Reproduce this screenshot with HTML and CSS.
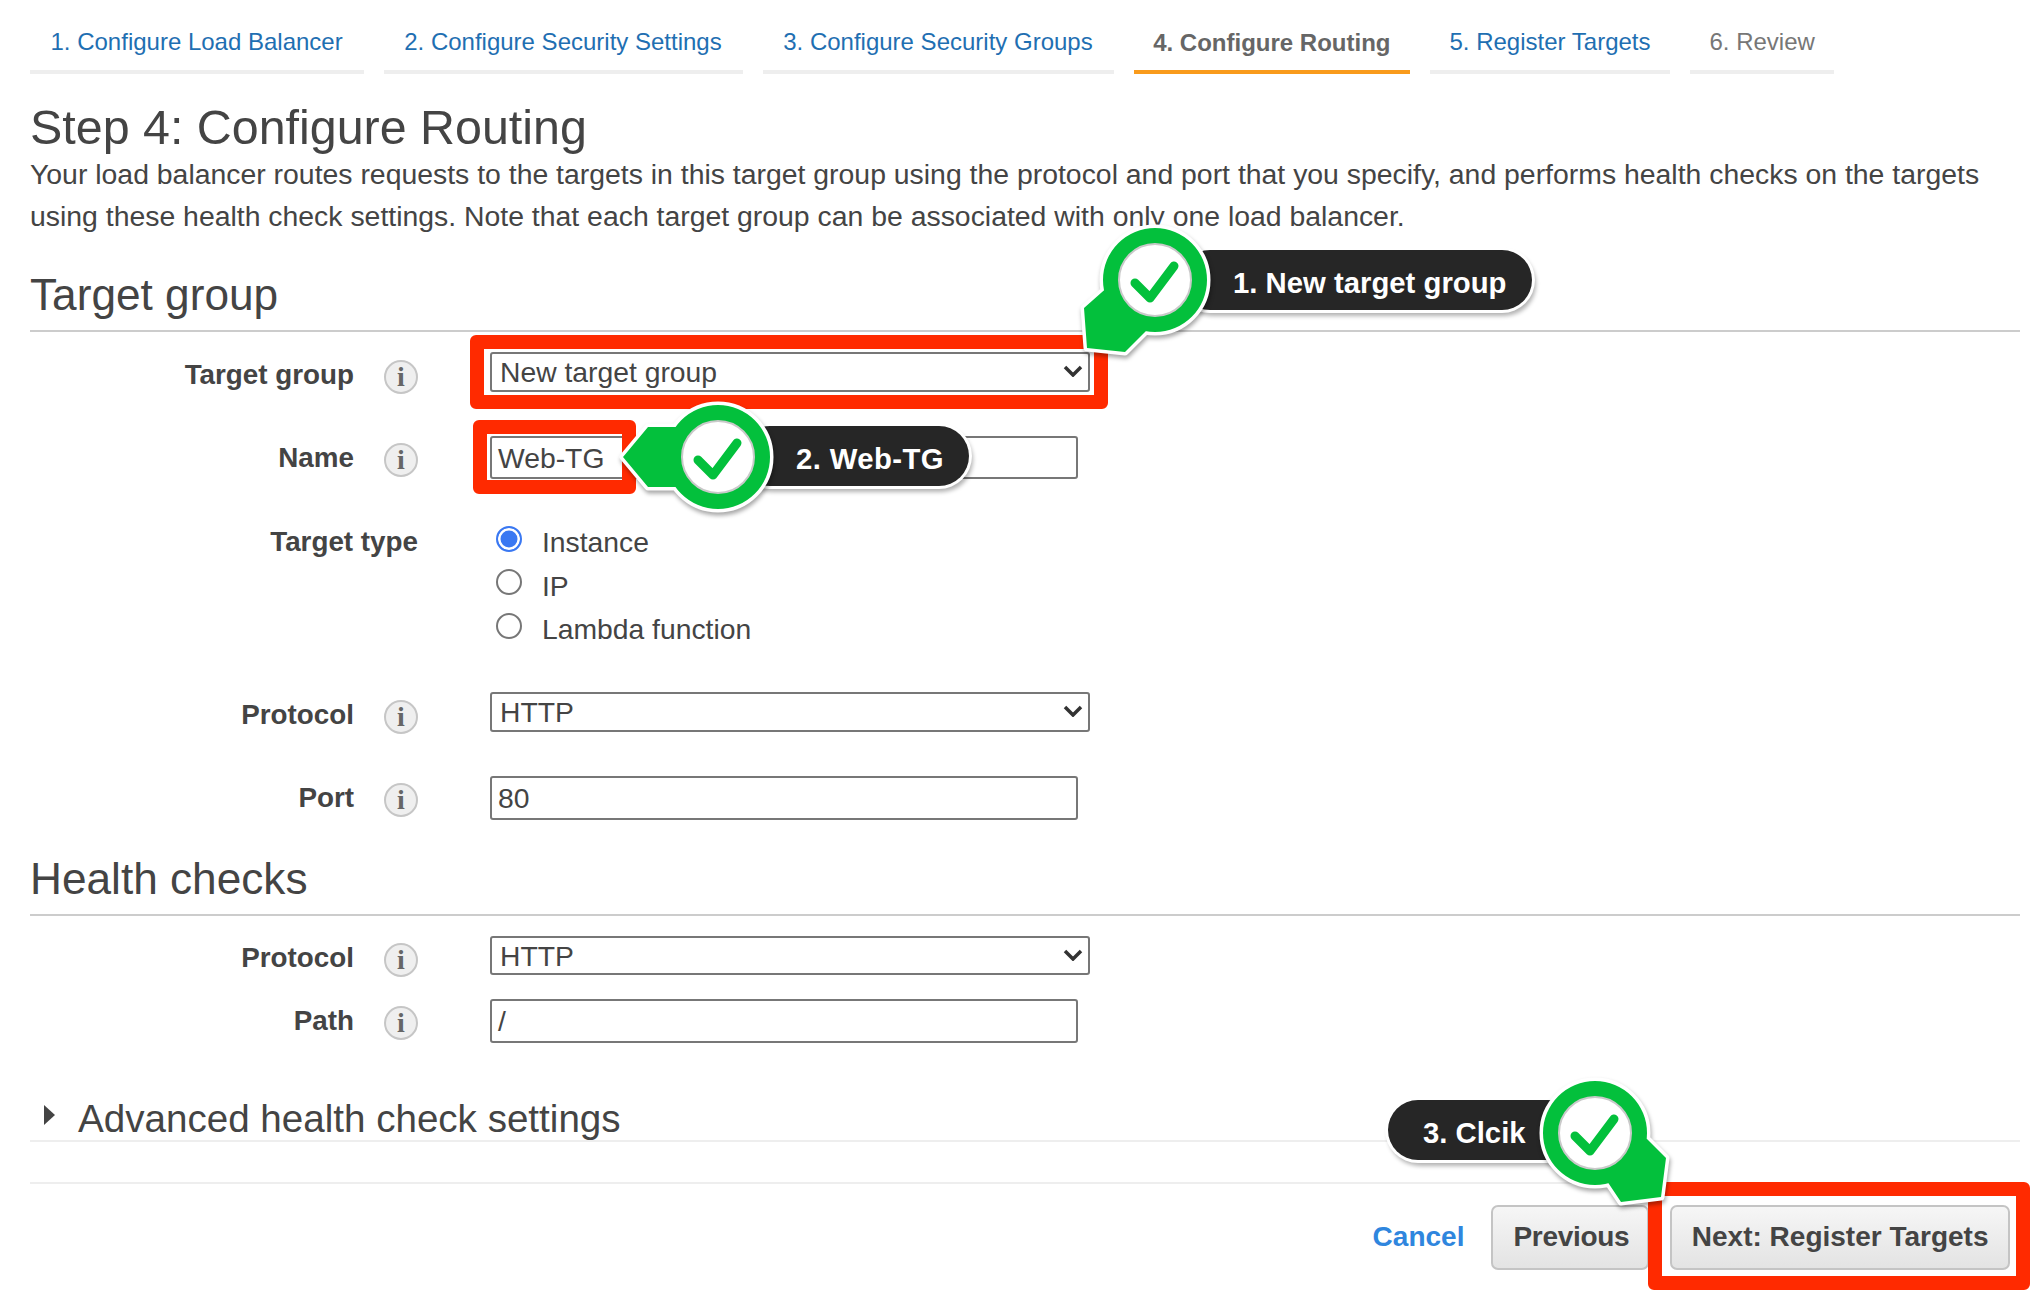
FILE: index.html
```html
<!DOCTYPE html>
<html lang="en">
<head>
  <meta charset="UTF-8" />
  <title>Step 4: Configure Routing</title>
  <link rel="stylesheet" href="styles.css">
</head>
<body>
  <div class="page">
    <ul class="tabs">
      <li class="tab">1. Configure Load Balancer</li>
      <li class="tab">2. Configure Security Settings</li>
      <li class="tab">3. Configure Security Groups</li>
      <li class="tab active">4. Configure Routing</li>
      <li class="tab">5. Register Targets</li>
      <li class="tab off">6. Review</li>
    </ul>

    <h1>Step 4: Configure Routing</h1>
    <p class="intro">Your load balancer routes requests to the targets in this target group using the protocol and port that you specify, and performs health checks on the targets<br>using these health check settings. Note that each target group can be associated with only one load balancer.</p>

    <h2>Target group</h2>
    <div class="row first low">
      <div class="label">Target group</div>
      <div class="info">i</div>
      <div class="select">New target group <svg viewBox="0 0 20 12"><path d="M2 2l8 8 8-8" /></svg></div>
    </div>
    <div class="row name">
      <div class="label">Name</div>
      <div class="info">i</div>
      <div class="input">Web-TG</div>
    </div>
    <div class="row type">
      <div class="label wide">Target type</div>
      <div class="radios">
        <div class="radio-row"><span class="radio on"></span>Instance</div>
        <div class="radio-row"><span class="radio"></span>IP</div>
        <div class="radio-row"><span class="radio"></span>Lambda function</div>
      </div>
    </div>
    <div class="row proto low">
      <div class="label">Protocol</div>
      <div class="info">i</div>
      <div class="select">HTTP <svg viewBox="0 0 20 12"><path d="M2 2l8 8 8-8" /></svg></div>
    </div>
    <div class="row port">
      <div class="label">Port</div>
      <div class="info">i</div>
      <div class="input">80</div>
    </div>

    <h2 class="health">Health checks</h2>
    <div class="row first low">
      <div class="label">Protocol</div>
      <div class="info">i</div>
      <div class="select short">HTTP <svg viewBox="0 0 20 12"><path d="M2 2l8 8 8-8" /></svg></div>
    </div>
    <div class="row path">
      <div class="label">Path</div>
      <div class="info">i</div>
      <div class="input">/</div>
    </div>

    <div class="advanced"><span class="arrow"></span>Advanced health check settings</div>

    <div class="footer">
      <a class="cancel">Cancel</a>
      <button class="btn prev">Previous</button>
      <button class="btn next">Next: Register Targets</button>
    </div>
  </div>

  <!-- annotations drawn on top of the screenshot -->
  <div class="mark mark1"></div>
  <div class="mark mark2"></div>
  <div class="mark mark3"></div>

  <div class="pill pill1">1. New target group</div>
  <svg class="badge badge1" viewBox="-100 -100 200 200">
    <path class="shape" d="M-8 50L-30 72L-68 68L-71 28L-45 5ZM-52 0A52 52 0 1 1 52 0A52 52 0 1 1 -52 0Z" />
    <circle class="hole" r="36" />
    <path class="tick" d="M-20 3L-5 18L19 -14" />
  </svg>

  <div class="pill pill2">2. Web-TG</div>
  <svg class="badge badge2" viewBox="-100 -100 200 200">
    <path class="shape" d="M-40 30L-70 30L-95 0L-70 -30L-40 -30ZM-52 0A52 52 0 1 1 52 0A52 52 0 1 1 -52 0Z" />
    <circle class="hole" r="36" />
    <path class="tick" d="M-20 3L-5 18L19 -14" />
  </svg>

  <div class="pill pill3">3. Clcik</div>
  <svg class="badge badge3" viewBox="-100 -100 200 200">
    <path class="shape" d="M30 -16L71 25L66 64L26 69L10 45ZM-52 0A52 52 0 1 1 52 0A52 52 0 1 1 -52 0Z" />
    <circle class="hole" r="36" />
    <path class="tick" d="M-20 3L-5 18L19 -14" />
  </svg>
</body>
</html>
```

FILE: styles.css
```css
html, body {
  margin: 0;
  background: white;
}
body {
  font-family: "Liberation Sans", Arial, sans-serif;
  color: #444;
  position: relative;
  height: 1302px;
  overflow: hidden;
}
.page {
  padding: 0 20px 0 30px;
}

/* wizard tabs */
.tabs {
  display: flex;
  gap: 20px;
  list-style: none;
  margin: 0;
  padding: 24px 0 0;
}
.tab {
  padding: 0 21px 0 20.5px;
  height: 46px;
  line-height: 36px;
  font-size: 24px;
  color: #1f6fb2;
  border-bottom: 4px solid #eee;
}
.tab:nth-child(n+4) {
  padding: 0 19.5px;
}
.tab.active {
  color: #666;
  font-weight: bold;
  border-bottom-color: #f99b1c;
  line-height: 38px;
}
.tab.off {
  color: #777;
}

h1 {
  margin: 27px 0 0;
  font-size: 48.4px;
  line-height: 52px;
  font-weight: normal;
}
.intro {
  margin: 0;
  font-size: 28.4px;
  line-height: 42px;
  white-space: nowrap;
}
h2 {
  margin: 33px 0 0;
  font-size: 44.2px;
  line-height: 50px;
  font-weight: normal;
  padding-bottom: 10px;
  border-bottom: 2px solid #ccc;
}
h2.health {
  margin-top: 34px;
}

/* form rows */
.row {
  display: grid;
  grid-template-columns: 324px 30px 34px 72px 1fr;
  align-items: center;
}
.row.first { margin-top: 20px; }
.row.name { margin-top: 44px; }
.row.type { margin-top: 42px; align-items: start; }
.row.proto { margin-top: 40px; }
.row.port { margin-top: 44px; }
.row.path { margin-top: 24px; }

.label {
  grid-column: 1;
  text-align: right;
  font-size: 27.8px;
  font-weight: bold;
  line-height: 34px;
}
.label.wide {
  grid-column: 1 / 4;
  margin-top: 4px;
}
.row.low .label {
  margin: 3px 0 -3px;
}
.info {
  grid-column: 3;
  width: 30px;
  height: 30px;
  margin: 2px 0 -2px;
  border: 2px solid #c6c6c6;
  border-radius: 50%;
  background: #efefef;
  text-align: center;
  font-family: "Liberation Serif", serif;
  font-size: 28px;
  font-weight: bold;
  line-height: 30px;
  color: #666;
}
.row.low .info {
  margin: 5px 0 -5px;
}
.select, .input {
  grid-column: 5;
  box-sizing: border-box;
  font-size: 28.3px;
  border: 2px solid #777;
  border-radius: 3px;
  background: white;
}
.select {
  width: 600px;
  height: 40px;
  line-height: 37px;
  padding-left: 8px;
  position: relative;
}
.select.short {
  height: 39px;
}
.select svg {
  position: absolute;
  right: 5px;
  top: 11px;
  width: 20px;
  height: 12px;
}
.select svg path {
  fill: none;
  stroke: #333;
  stroke-width: 3.5;
}
.input {
  width: 588px;
  height: 44px;
  line-height: 40px;
  padding-left: 6px;
}
.row.name .input { height: 43px; }

.radios {
  grid-column: 5;
  font-size: 28.3px;
}
.radio-row {
  display: flex;
  align-items: center;
  height: 43.5px;
}
.radio {
  box-sizing: border-box;
  width: 26px;
  height: 26px;
  margin: -8px 20px 0 6px;
  border: 2px solid #777;
  border-radius: 50%;
  background: white;
}
.radio.on {
  border: 2.5px solid #3a78f2;
  box-shadow: inset 0 0 0 2.5px white;
  background: #3a78f2;
}

.advanced {
  margin-top: 54px;
  font-size: 38.6px;
  line-height: 43px;
  border-bottom: 2px solid #eee;
  display: flex;
  align-items: center;
}
.arrow {
  width: 0;
  height: 0;
  margin: -6px 23px 0 14px;
  border-left: 11px solid #444;
  border-top: 10px solid transparent;
  border-bottom: 10px solid transparent;
}

.footer {
  margin-top: 40px;
  padding: 21px 10px 0 0;
  border-top: 2px solid #eee;
  display: flex;
  justify-content: flex-end;
  align-items: center;
}
.cancel {
  color: #2f86de;
  font-size: 28px;
  font-weight: bold;
  margin-right: 27px;
}
.btn {
  height: 65px;
  padding: 0 20px;
  font-family: inherit;
  font-size: 28px;
  font-weight: bold;
  color: #444;
  border: 2px solid #c4c4c4;
  border-radius: 7px;
  background: linear-gradient(#f6f6f6, #e3e3e3);
}
.btn.prev {
  padding: 0 18px 0 20px;
  letter-spacing: -0.3px;
}
.btn.next {
  padding: 0 19.5px;
  margin-left: 21px;
}

/* red boxes */
.mark {
  position: absolute;
  box-sizing: border-box;
  border: 14px solid #ff2a00;
  border-radius: 6px;
}
.mark1 { left: 470px; top: 335px; width: 638px; height: 74px; }
.mark2 { left: 473px; top: 420px; width: 163px; height: 74px; }
.mark3 { left: 1648px; top: 1182px; width: 382px; height: 108px; }

/* callouts */
.pill {
  position: absolute;
  height: 60px;
  line-height: 65px;
  box-sizing: border-box;
  background: #262626;
  color: white;
  font-size: 29.3px;
  font-weight: bold;
  white-space: nowrap;
  border-radius: 30px;
  box-shadow: 0 0 0 3px white, 2px 4px 4px 2px rgba(0,0,0,0.3);
}
.pill1 { left: 1180px; top: 250px; width: 352px; padding-left: 53px; }
.pill2 { left: 740px; top: 426px; width: 229px; padding-left: 56px; letter-spacing: 0.4px; }
.pill3 { left: 1388px; top: 1100px; width: 190px; padding-left: 35px; }

.badge {
  position: absolute;
  width: 200px;
  height: 200px;
  filter: drop-shadow(1px 3px 2px rgba(0,0,0,0.35));
}
.badge1 { left: 1055px; top: 180px; }
.badge2 { left: 618px; top: 357px; }
.badge3 { left: 1495px; top: 1033px; }
.shape {
  fill: #03c03c;
  stroke: white;
  stroke-width: 7;
  stroke-linejoin: round;
  paint-order: stroke;
}
.hole {
  fill: white;
  stroke: #c9c9c9;
  stroke-width: 2;
}
.tick {
  fill: none;
  stroke: #03c03c;
  stroke-width: 9;
  stroke-linecap: round;
  stroke-linejoin: round;
}
```
